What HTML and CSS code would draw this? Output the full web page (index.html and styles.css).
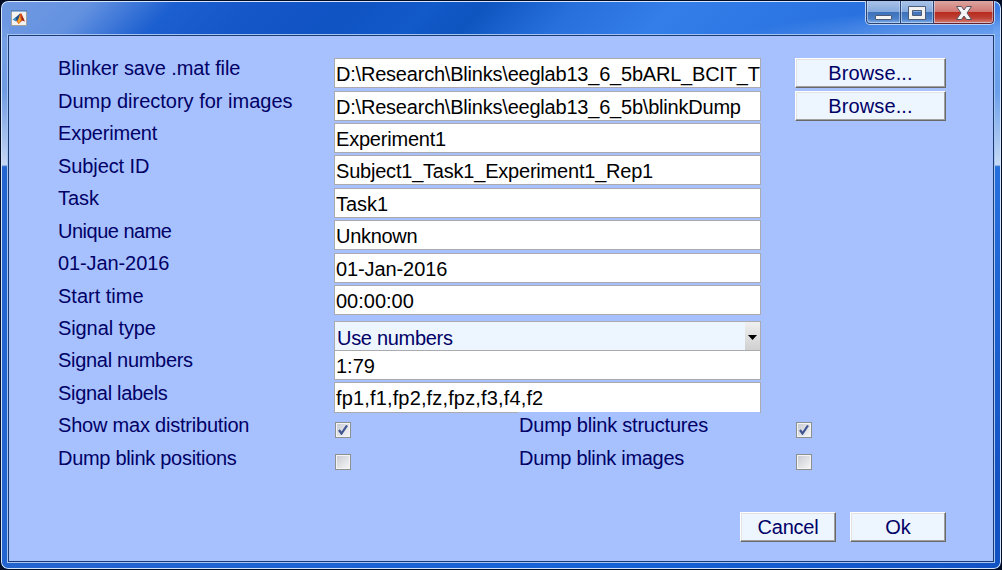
FILE: index.html
```
<!DOCTYPE html>
<html lang="en">
<head>
<meta charset="utf-8">
<title>Blinker settings</title>
<link rel="stylesheet" href="styles.css">
</head>
<body>
<div class="window">
  <header class="titlebar">
    <svg class="app-icon" width="16" height="16" viewBox="0 0 16 16">
      <rect x=".5" y=".5" width="15" height="15" fill="#f3f3f1" stroke="#a3a19b"/>
      <path d="M0 0h16v2H0z" fill="#5c82b5"/><path d="M1 1h14v1H1z" fill="#91b4dd"/>
      <path d="M1.500 9.500L5 7l2.500 2L5 11.500z" fill="#3b8bc4"/>
      <path d="M4.500 7.500L9 3.500v6L6 11.500z" fill="#234f88"/>
      <path d="M9 3.500h1.500l3.500 8-2.500-1-4 3.500L5.500 11l2-1.500z" fill="#d8481a"/>
      <path d="M9 5l1 5-2 4-1.500-3z" fill="#f5a623"/>
      <path d="M10.500 5l3 6.500-2.500-1.500z" fill="#8f1d14"/>
    </svg>
    <div class="controls">
      <span class="control minimize"><svg width="34" height="22"><rect x="8.5" y="14.5" width="16" height="4" rx=".5" fill="#f4f4f4" stroke="#4d5b76"/></svg></span>
      <span class="control maximize"><svg width="32" height="22"><path fill-rule="evenodd" d="M7.500 5.500h17v13h-17zM11.500 9.500v5h9v-5z" fill="#f1f1f1" stroke="#4d5b76"/></svg></span>
      <span class="control close"><svg width="58" height="22"><path d="M22.500 5.500h5l2.500 3.500 2.500-3.500h5l-4.500 6.500 4.500 6.500h-5l-2.500-3.500-2.500 3.500h-5l4.500-6.500z" fill="#f4f4f4" stroke="#5a5260"/></svg></span>
    </div>
  </header>
  <main class="client">
    <div class="form">
      <span class="label first snug-1">Blinker save .mat file</span><div class="field snug-2">D:\Research\Blinks\eeglab13_6_5bARL_BCIT_T</div><button class="button browse">Browse...</button>
      <span class="label">Dump directory for images</span><div class="field snug-2">D:\Research\Blinks\eeglab13_6_5b\blinkDump</div><button class="button browse">Browse...</button>
      <span class="label snug-2">Experiment</span><div class="field snug-2">Experiment1</div>
      <span class="label snug-1">Subject ID</span><div class="field snug-2">Subject1_Task1_Experiment1_Rep1</div>
      <span class="label">Task</span><div class="field">Task1</div>
      <span class="label snug-4">Unique name</span><div class="field snug-3">Unknown</div>
      <span class="label snug-1">01-Jan-2016</span><div class="field snug-1">01-Jan-2016</div>
      <span class="label low">Start time</span><div class="field">00:00:00</div>
      <span class="label snug-1">Signal type</span><div class="select snug-3"><span>Use numbers</span><i class="arrow"><svg width="15" height="29"><path d="M3 14h9l-4.500 5z" fill="#000"/></svg></i></div>
      <span class="label snug-3">Signal numbers</span><div class="field">1:79</div>
      <span class="label snug-3">Signal labels</span><div class="field last">fp1,f1,fp2,fz,fpz,f3,f4,f2</div>
    </div>
    <div class="options">
      <span class="label snug-2">Show max distribution</span><span class="check"><svg width="10" height="10"><path d="M1 5l2.500 3.500L9 .500" fill="none" stroke="#405493" stroke-width="2.200"/></svg></span>
      <span class="label snug-2">Dump blink structures</span><span class="check"><svg width="10" height="10"><path d="M1 5l2.500 3.500L9 .500" fill="none" stroke="#405493" stroke-width="2.200"/></svg></span>
      <span class="label low snug-3">Dump blink positions</span><span class="check"></span>
      <span class="label low snug-3">Dump blink images</span><span class="check"></span>
    </div>
    <footer class="actions"><button class="button snug-2">Cancel</button><button class="button">Ok</button></footer>
  </main>
</div>
</body>
</html>
```
FILE: styles.css
```
* { box-sizing: border-box; }
body { margin: 0; background: #020c24; font: 20px/23px "Liberation Sans", Arial, sans-serif; color: #000066; overflow: hidden; }
.window {
  width: 1002px; height: 570px; padding: 1px 6px 6px;
  border: 1px solid #020c24; border-radius: 8px;
  box-shadow: inset 0 0 0 1px #d5e5fb;
  background:
    linear-gradient(rgba(118,160,229,0) 20px, #76a0e5 36px, #6f9be3 90px, #c6d7f4 164px, #4d82d4 165px, transparent 166px) 0 0 / 8px 100% no-repeat,
    linear-gradient(rgba(112,166,242,0) 20px, #70a6f2 36px, #6b9fea 90px, #c6daf5 164px, #4d82d4 165px, #2670de 166px, #1253c4 480px) 100% 0 / 8px 100% no-repeat,
    radial-gradient(ellipse 270px 34px at 100% 42px, #7aaaf0, rgba(122,170,240,0)) 100% 0 / 300px 34px no-repeat,
    linear-gradient(135deg, #7099e2 0, #6492e0 64px, #1c5fd0 125px, #1557c9 180px, #1053c3 245px, #1259c9 309px, #0e55c0 345px, #2870dc 410px, #347eea 479px, #2871df 613px, #3c7de4 719px) 0 0 / 100% 34px no-repeat,
    linear-gradient(90deg, #2464cf, #1562d7 60%, #1253c4);
}
.titlebar { height: 32px; display: flex; justify-content: space-between; padding-left: 4px; }
.app-icon { margin-top: 8px; }
.controls { display: flex; height: 24px; margin-top: -1px; border: 1px solid #b9d2f5; border-top: 0; border-radius: 0 0 5px 5px; overflow: hidden; }
.control { height: 23px; border: 1px solid #2a4370; border-top: 0; background: linear-gradient(#aac3e8, #84a9dd 11px, #3c70b9 11px, #4c80c9 18px, #7faee8); box-shadow: inset 1px -1px rgba(209,227,250,.6), inset -1px 0 rgba(209,227,250,.5); overflow: hidden; }
.control svg { display: block; }
.minimize { width: 35px; border-radius: 0 0 0 4px; }
.maximize { width: 33px; border-left: 0; }
.close { width: 60px; border-color: #65202b; border-left: 0; border-radius: 0 0 4px 0; background: linear-gradient(#dda59f, #cf7772 11px, #b92a1d 11px, #bd4034 17px, #d98074); }
.client { width: 988px; height: 529px; border: 1px solid #a7c5f3; padding: 23.300px 48px 0 50px; background: #a7c1ff; box-shadow: inset 0 0 0 1px #1c3b70; }
.form { display: grid; grid-template-columns: 276px 427px 185px; grid-auto-rows: 32.400px; }
.label { grid-column: 1; white-space: nowrap; margin-top: -.600px; }
.label.first { margin-top: -1px; }
.label.low { margin-top: 0; }
.field { grid-column: 2; height: 30px; border: 1px solid #aaaaaf; background: #fff; color: #000; padding: 4px 0 0 1px; overflow: hidden; white-space: nowrap; }
.select { grid-column: 2; height: 30px; margin-top: 3.500px; border: 1px solid #aaaaaf; background: #edf5ff; display: flex; justify-content: space-between; padding: 0 0 0 2px; }
.select span { padding-top: 5px; }
.arrow { width: 15px; height: 28px; background: linear-gradient(#f0f0f0, #d0d0d0); }
.arrow svg { display: block; margin-top: -1px; }
.field.last { height: 31px; letter-spacing: .150px; border-bottom: 0; background: linear-gradient(90deg, #aaaaaf 183px, #a7c1ff 183px) 0 100% / 100% 1px no-repeat #fff; }
.snug-1 { letter-spacing: -.100px; }
.snug-2 { letter-spacing: -.210px; }
.snug-3 { letter-spacing: -.300px; }
.snug-4 { letter-spacing: -.500px; }
.button { font: inherit; color: inherit; height: 30px; padding: 1px 0 0; background: #edf5ff; border: 1px solid; border-color: #fff #696969 #696969 #fff; box-shadow: inset -1px -1px #a0a0a0, inset 1px 1px #e3e3e3; border-radius: 0; }
.browse { grid-column: 3; width: 151px; margin-left: 34px; letter-spacing: .100px; }
.options { display: grid; grid-template-columns: 277px 184px 277px 16px; grid-auto-rows: 32.400px; }
.options .label { grid-column: auto; }
.check { width: 16px; height: 16px; margin-top: 7px; border: 1px solid #8e8f8f; padding: 1px; background: linear-gradient(135deg, #c9cdd4, #f4f4f4) content-box, #f4f4f4; }
.check svg { display: block; margin: 1px; }
.actions { display: flex; justify-content: flex-end; gap: 14px; margin-top: 32.500px; }
.actions .button { width: 96px; }
```
